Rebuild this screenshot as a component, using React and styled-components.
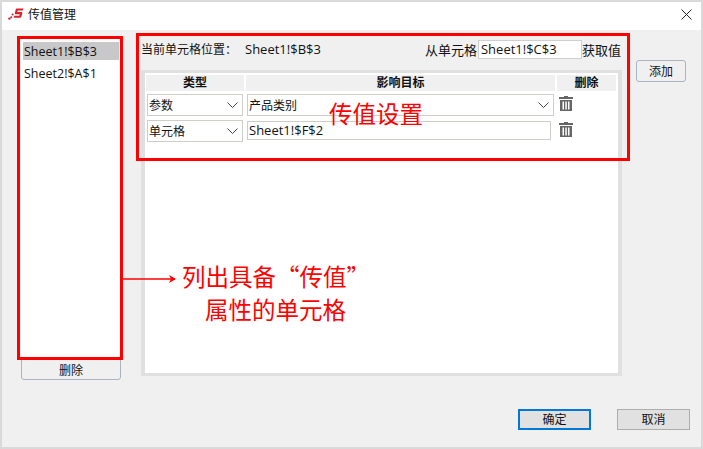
import styled, { createGlobalStyle } from "styled-components";

const GlobalStyle = createGlobalStyle`
  html, body {
    margin: 0;
    padding: 0;
    background: #f0f0f0;
  }
  * {
    box-sizing: border-box;
  }
`;

const rows = [
  { id: "param", type: "参数", target: "产品类别", isSelect: true },
  { id: "cell", type: "单元格", target: "Sheet1!$F$2", isSelect: false },
];

function Chevron() {
  return (
    <ChevronIcon width="11" height="6" viewBox="0 0 11 6">
      <polyline points="0.5,0.5 5.5,5.5 10.5,0.5" fill="none" stroke="#444" strokeWidth="1" />
    </ChevronIcon>
  );
}

function TrashIcon() {
  return (
    <svg width="14" height="15" viewBox="0 0 14 15">
      <path d="M5 0h4v1h5v2H0V1h5z" fill="#666" />
      <path d="M1 4h12v11H1zM3.5 5.5v8h1.5v-8zM6.3 5.5v8h1.5v-8zM9 5.5v8h1.5v-8z" fill="#666" fillRule="evenodd" />
    </svg>
  );
}

function Logo() {
  return (
    <svg width="16" height="12" viewBox="0 0 16 12">
      <path d="M9 0.5h6.5l-.7 2H9.8l-.5 1.4h3.9c1 0 1.4.6 1.1 1.5l-.9 3c-.3.9-.9 1.4-1.9 1.4H5.6l.7-2h5l.5-1.6H8c-1 0-1.4-.6-1.1-1.5l.7-2.7c.2-.9.6-1.5 1.4-1.5z" fill="#d9232d" />
      <circle cx="4.6" cy="6.6" r="1" fill="#d9232d" />
      <circle cx="3.2" cy="9.2" r="1" fill="#d9232d" />
      <circle cx="1.4" cy="10.6" r="1.2" fill="#d9232d" />
    </svg>
  );
}

export default function App() {
  return (
    <>
      <GlobalStyle />
      <Dialog lang="zh-CN">
        <TitleBar>
          <Logo />
          <Title>传值管理</Title>
          <CloseIcon width="11" height="11" viewBox="0 0 11 11">
            <path d="M0.5 0.5L10.5 10.5M10.5 0.5L0.5 10.5" stroke="#222" strokeWidth="1" />
          </CloseIcon>
        </TitleBar>

        <Main>
          <LeftColumn>
            <CellList>
              <CellItem $selected>Sheet1!$B$3</CellItem>
              <CellItem>Sheet2!$A$1</CellItem>
            </CellList>
            <RemoveButton>删除</RemoveButton>
          </LeftColumn>

          <RightColumn>
            <InfoRow>
              <CurrentCell>
                <span>当前单元格位置：</span>
                <CellRef>Sheet1!$B$3</CellRef>
              </CurrentCell>
              <SourceGroup>
                <span>从单元格</span>
                <SourceInput>Sheet1!$C$3</SourceInput>
                <span>获取值</span>
              </SourceGroup>
            </InfoRow>
            <TablePanel>
              <HeaderRow>
                <HeaderCell>类型</HeaderCell>
                <HeaderCell>影响目标</HeaderCell>
                <HeaderCell>删除</HeaderCell>
              </HeaderRow>
              {rows.map((row) => (
                <DataRow key={row.id}>
                  <SelectBox>
                    {row.type}
                    <Chevron />
                  </SelectBox>
                  {row.isSelect ? (
                    <SelectBox>
                      {row.target}
                      <Chevron />
                    </SelectBox>
                  ) : (
                    <TargetInput>{row.target}</TargetInput>
                  )}
                  <TrashCell>
                    <TrashIcon />
                  </TrashCell>
                </DataRow>
              ))}
            </TablePanel>
          </RightColumn>

          <AddButton>添加</AddButton>
        </Main>

        <Footer>
          <PrimaryButton>确定</PrimaryButton>
          <SecondaryButton>取消</SecondaryButton>
        </Footer>

        <ListFrame />
        <SettingsFrame />
        <SettingsNote>传值设置</SettingsNote>
        <ArrowIcon width="54" height="10" viewBox="0 0 54 10">
          <path d="M0 5H52" stroke="#f00" strokeWidth="1.5" />
          <path d="M46 1L53 5L46 9L48 5z" fill="#f00" />
        </ArrowIcon>
        <ListNote>
          列出具备“传值”
          <br />
          <NoteIndent>属性的单元格</NoteIndent>
        </ListNote>
      </Dialog>
    </>
  );
}

const font = `"Open Sans", "Noto Sans CJK SC", sans-serif`;

const Dialog = styled.div`
  position: relative;
  width: 703px;
  height: 449px;
  display: flex;
  flex-direction: column;
  border: 2px solid #d9d9d9;
  background: #f0f0f0;
  font-family: ${font};
  font-size: 12px;
  color: #111;
  overflow: hidden;
`;

const TitleBar = styled.div`
  height: 28px;
  padding: 0 9px 4px 6px;
  display: flex;
  align-items: center;
  background: #fff;
  flex-shrink: 0;
`;

const Title = styled.span`
  margin-left: 4px;
  font-size: 12px;
`;

const CloseIcon = styled.svg`
  margin-left: auto;
`;

const Main = styled.div`
  display: flex;
  padding: 9px 0 0 19px;
`;

const LeftColumn = styled.div`
  width: 100px;
  display: flex;
  flex-direction: column;
`;

const CellList = styled.div`
  height: 319px;
  padding: 3px 2px;
  background: #fff;
`;

const CellItem = styled.div`
  height: 18px;
  margin-bottom: 4px;
  padding: 1px 0 0 1px;
  line-height: 18px;
  font-size: 12.5px;
  background: ${(props) => (props.$selected ? "#c8c8c8" : "transparent")};
`;

const RemoveButton = styled.div`
  height: 22px;
  display: flex;
  align-items: center;
  justify-content: center;
  padding-top: 1px;
  border: 1px solid #a9b4c2;
  border-radius: 3px;
  background: #f0f0f0;
`;

const RightColumn = styled.div`
  width: 481px;
  margin-left: 20px;
`;

const InfoRow = styled.div`
  height: 19px;
  margin: 1px 0 11px;
  padding: 0 1px 1px 0;
  display: flex;
  align-items: center;
  justify-content: space-between;
  font-size: 13px;
`;

const CurrentCell = styled.span`
  font-size: 12px;
  display: flex;
  align-items: center;
`;

const CellRef = styled.span`
  margin-left: 8px;
  font-size: 13px;
`;

const SourceGroup = styled.div`
  display: flex;
  align-items: center;
`;

const SourceInput = styled.div`
  width: 104px;
  height: 19px;
  margin: 1px 0 0 1px;
  padding-left: 2px;
  line-height: 16px;
  background: #fff;
  border: 1px solid #cfcfcf;
`;

const TablePanel = styled.div`
  height: 306px;
  padding: 2px 1px;
  border-style: solid;
  border-color: #e0e0e0;
  border-width: 3px 4px;
  background: #fff;
`;

const HeaderRow = styled.div`
  display: grid;
  grid-template-columns: 98px 309px 59px;
  column-gap: 2px;
  margin-bottom: 3px;
`;

const HeaderCell = styled.div`
  height: 16px;
  line-height: 16px;
  text-align: center;
  font-weight: 700;
  background: #f0f0f0;
`;

const DataRow = styled(HeaderRow)`
  height: 22px;
  margin-bottom: 4px;
`;

const SelectBox = styled.div`
  margin: 0 1px;
  padding: 0 4px 0 1px;
  display: flex;
  align-items: center;
  justify-content: space-between;
  border: 1px solid #cfcdc8;
`;

const ChevronIcon = styled.svg`
  flex-shrink: 0;
`;

const TargetInput = styled.div`
  width: 304px;
  height: 19px;
  margin: 1px 0 0 1px;
  padding-left: 1px;
  line-height: 17px;
  font-size: 13px;
  border: 1px solid #cfcdc8;
`;

const TrashCell = styled.div`
  padding: 2px 0 0 2px;
`;

const AddButton = styled.div`
  width: 50px;
  height: 22px;
  margin: 21px 0 0 14px;
  display: flex;
  align-items: center;
  justify-content: center;
  border: 1px solid #a9b4c2;
  border-radius: 3px;
  background: #f0f0f0;
`;

const Footer = styled.div`
  display: flex;
  justify-content: flex-end;
  gap: 26px;
  margin-top: 29px;
  padding-right: 11px;
`;

const PrimaryButton = styled.div`
  width: 73px;
  height: 21px;
  padding-bottom: 2px;
  display: flex;
  align-items: center;
  justify-content: center;
  border: 2px solid #0078d7;
  background: #e1e1e1;
`;

const SecondaryButton = styled(PrimaryButton)`
  border: 1px solid #adadad;
`;

const ListFrame = styled.div`
  position: absolute;
  left: 15px;
  top: 34px;
  width: 106px;
  height: 324px;
  border: 3px solid #f00;
`;

const SettingsFrame = styled.div`
  position: absolute;
  left: 134px;
  top: 31px;
  width: 494px;
  height: 128px;
  border: 3px solid #f00;
`;

const Note = styled.div`
  position: absolute;
  color: #f00;
  font-family: "Noto Sans CJK SC", sans-serif;
  font-size: 23.5px;
  white-space: nowrap;
`;

const SettingsNote = styled(Note)`
  left: 327px;
  top: 96px;
  line-height: 30px;
`;

const ListNote = styled(Note)`
  left: 180px;
  top: 258px;
  line-height: 33px;
`;

const NoteIndent = styled.span`
  margin-left: 23px;
`;

const ArrowIcon = styled.svg`
  position: absolute;
  left: 121px;
  top: 272px;
`;
